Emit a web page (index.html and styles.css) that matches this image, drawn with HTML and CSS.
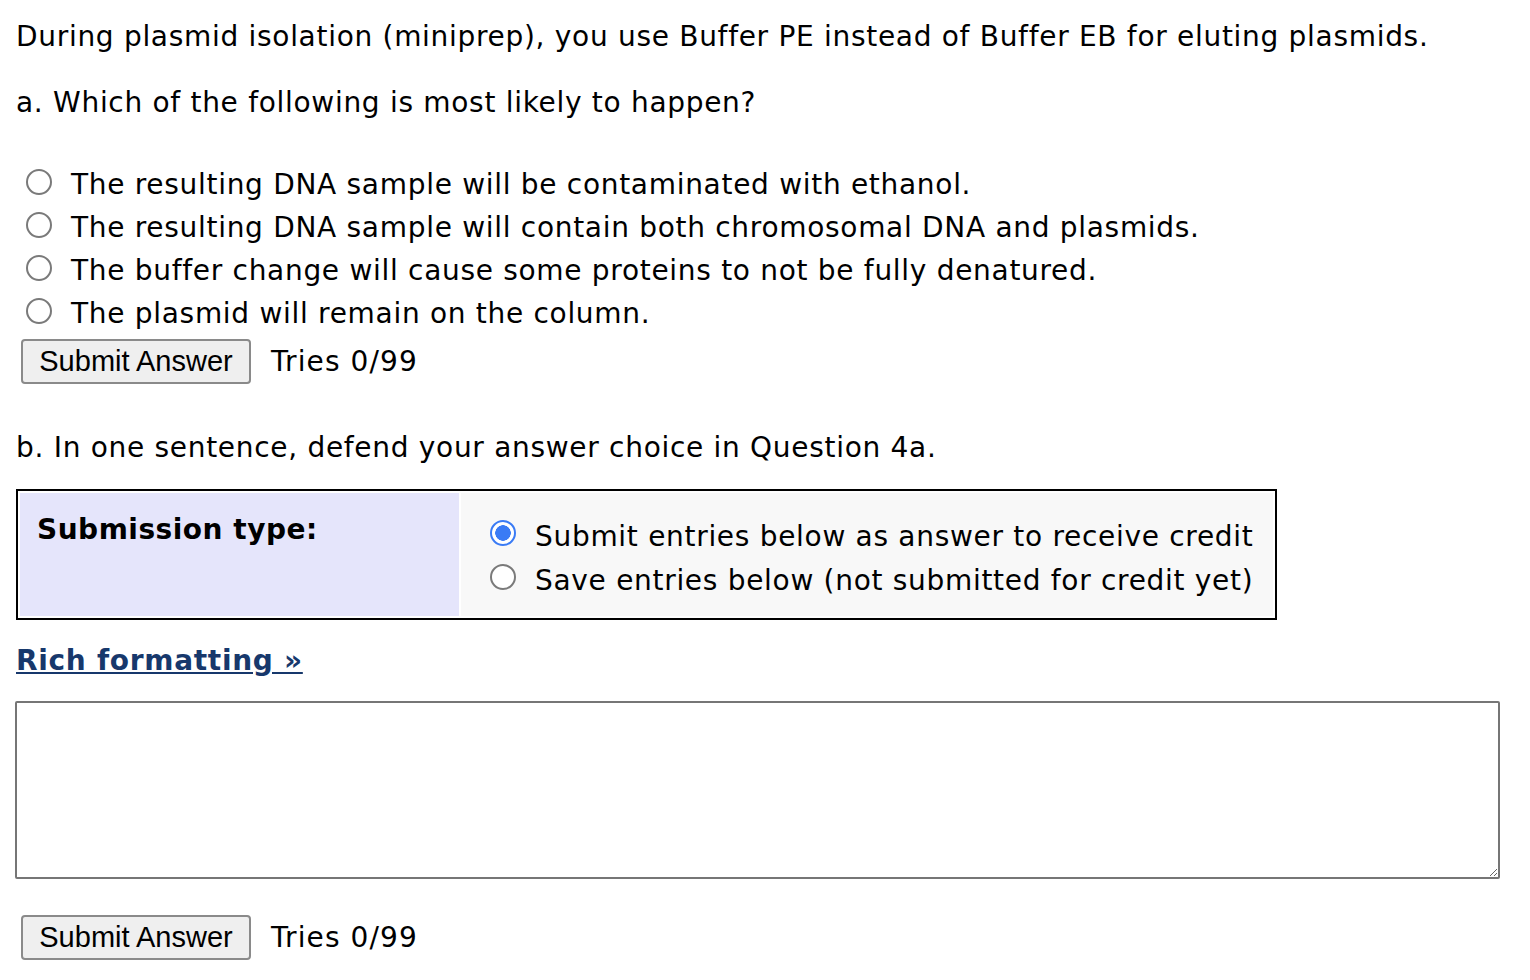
FILE: index.html
```html
<!DOCTYPE html>
<html lang="en">
<head>
    <meta charset="UTF-8">
    <title>Problem 4</title>
    <link rel="stylesheet" href="styles.css">
</head>
<body>
    <div class="problem">
        <p class="stem">During plasmid isolation (miniprep), you use Buffer PE instead of Buffer EB for eluting plasmids.</p>
        <p class="part">a. Which of the following is most likely to happen?</p>

        <div class="choices">
            <label class="choice"><input type="radio" name="q4a" class="radio"> The resulting DNA sample will be contaminated with ethanol.</label>
            <label class="choice"><input type="radio" name="q4a" class="radio"> The resulting DNA sample will contain both chromosomal DNA and plasmids.</label>
            <label class="choice"><input type="radio" name="q4a" class="radio"> The buffer change will cause some proteins to not be fully denatured.</label>
            <label class="choice"><input type="radio" name="q4a" class="radio"> The plasmid will remain on the column.</label>
        </div>
        <div class="submit-row">
            <button class="submit">Submit Answer</button>
            <span class="tries">Tries 0/99</span>
        </div>

        <p class="part part-b">b. In one sentence, defend your answer choice in Question 4a.</p>

        <table class="subtype">
            <tr>
                <td class="subtype-label">Submission type:</td>
                <td class="subtype-options">
                    <label class="opt"><input type="radio" name="sub" class="radio" checked> Submit entries below as answer to receive credit</label>
                    <label class="opt"><input type="radio" name="sub" class="radio"> Save entries below (not submitted for credit yet)</label>
                </td>
            </tr>
        </table>

        <a href="#" class="rich">Rich formatting &raquo;</a>

        <textarea class="answer"></textarea>

        <div class="submit-row submit-row-b">
            <button class="submit">Submit Answer</button>
            <span class="tries">Tries 0/99</span>
        </div>
    </div>
</body>
</html>
```

FILE: styles.css
```css
body {
    margin: 0;
    background: #fff;
    color: #000;
    font-family: 'DejaVu Sans', Verdana, sans-serif;
    font-size: 28px;
    letter-spacing: 0.7px;
}
.problem {
    padding: 21px 0 0 16px;
}
p {
    margin: 0;
    line-height: 32px;
}
.part {
    margin-top: 34px;
}
.choices {
    margin-top: 44px;
    padding-left: 10px;
}
.choice {
    display: flex;
    align-items: center;
    gap: 19px;
    height: 43px;
}
.radio {
    appearance: none;
    -webkit-appearance: none;
    margin: 0 0 6px 0;
    width: 26px;
    height: 26px;
    flex: none;
    border: 2px solid #7a7a7a;
    border-radius: 50%;
    background: #fff;
}
.radio:checked {
    border-color: #3a7bf5;
    background: radial-gradient(circle, #3a7bf5 0 7.5px, #fff 8px);
}
.submit-row {
    display: flex;
    align-items: center;
    gap: 20px;
    margin-top: 4px;
    padding-left: 5px;
}
.submit {
    font-family: 'Liberation Sans', Arial, sans-serif;
    font-size: 29px;
    letter-spacing: 0;
    height: 45px;
    width: 230px;
    padding: 0;
    background: #efefef;
    border: 2px solid #8a8a8a;
    border-radius: 4px;
    color: #000;
}
.tries {
    letter-spacing: 1.1px;
}
.part-b {
    margin-top: 48px;
}
.subtype {
    margin-top: 25px;
    border: 2px solid #000;
    border-spacing: 2px;
    width: 1261px;
    height: 131px;
}
.subtype td {
    padding: 0;
    vertical-align: top;
}
.subtype-label {
    width: 439px;
    background: #e5e5fb;
    font-weight: bold;
    letter-spacing: 0.5px;
    padding: 20px 0 0 17px !important;
    box-sizing: border-box;
}
.subtype-options {
    background: #f8f8f8;
    padding: 21px 0 0 29px !important;
}
.opt {
    display: flex;
    align-items: center;
    gap: 19px;
    height: 44px;
}
.rich {
    display: block;
    margin-top: 25px;
    line-height: 32px;
    font-weight: bold;
    color: #17386c;
    width: max-content;
}
.answer {
    display: block;
    margin-top: 24px;
    margin-left: -1px;
    width: 1485px;
    height: 178px;
    box-sizing: border-box;
    border: 2px solid #767676;
    border-radius: 2px;
    font-size: 28px;
}
.submit-row-b {
    margin-top: 36px;
}
```
